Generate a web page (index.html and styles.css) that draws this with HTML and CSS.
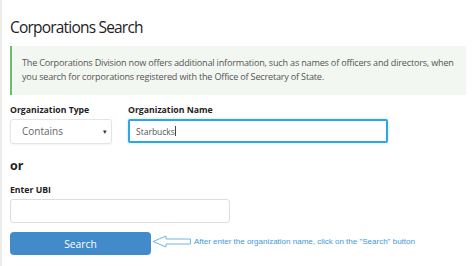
FILE: index.html
```html
<!DOCTYPE html>
<html lang="en">
<head>
    <meta charset="UTF-8">
    <title>Corporations Search</title>
    <link rel="stylesheet" href="styles.css">
</head>
<body>
    <div class="page">
        <h1>Corporations Search</h1>

        <div class="notice">
            The Corporations Division now offers additional information, such as names of officers and directors, when<br>
            you search for corporations registered with the Office of Secretary of State.
        </div>

        <div class="row">
            <div class="field">
                <label>Organization Type</label>
                <div class="select">
                    <span>Contains</span>
                    <span class="caret">&#9662;</span>
                </div>
            </div>
            <div class="field">
                <label>Organization Name</label>
                <div class="name-input">Starbucks<span class="cursor"></span></div>
            </div>
        </div>

        <div class="or">or</div>

        <div class="field">
            <label>Enter UBI</label>
            <div class="ubi-input"></div>
        </div>

        <div class="actions">
            <button>Search</button>
            <span class="callout">
                <svg class="arrow" width="40" height="13" viewBox="0 0 40 13">
                    <path d="M1 6.5 L14 1 L14 4 L38.5 4 L38.5 9 L14 9 L14 12 Z" fill="none" stroke="#6bb8e4" stroke-width="1"/>
                </svg>
                <span class="hint">After enter the organization name, click on the "Search" button</span>
            </span>
        </div>
    </div>
</body>
</html>
```

FILE: styles.css
```css
html, body {
    margin: 0;
    height: 100%;
}

body {
    font-family: 'Open Sans', 'Liberation Sans', sans-serif;
    background: #fff;
    color: #222;
}

.page {
    box-sizing: border-box;
    height: 100%;
    border-left: 2px solid #ececec;
    padding: 17px 8px 0 8px;
}

h1 {
    font-size: 15.5px;
    font-weight: 400;
    letter-spacing: -0.8px;
    margin: 0 0 9px 0;
    line-height: 20px;
}

.notice {
    background: #f3f7f1;
    border-left: 2px solid #6bbd6b;
    color: #555;
    font-size: 9.1px;
    letter-spacing: -0.2px;
    line-height: 14px;
    padding: 10px 4px 11px 10px;
    white-space: nowrap;
}

.row {
    display: flex;
    gap: 16px;
    margin-top: 9px;
}

.field label {
    display: block;
    font-size: 8.7px;
    font-weight: 700;
    color: #222;
    line-height: 12px;
    margin-bottom: 3px;
}

.select {
    box-sizing: border-box;
    width: 102px;
    height: 25px;
    border: 1px solid #e4e4e4;
    border-radius: 3px;
    box-shadow: 0 1px 2px rgba(0,0,0,0.05);
    display: flex;
    align-items: center;
    justify-content: space-between;
    padding: 0 4px 1px 11px;
    font-size: 10px;
    color: #666;
}

.caret {
    font-size: 7px;
    color: #333;
}

.name-input {
    box-sizing: border-box;
    width: 260px;
    height: 24px;
    border: 2px solid #2ea7de;
    border-radius: 2px;
    display: flex;
    align-items: center;
    padding-left: 6px;
    font-size: 8.5px;
    color: #555;
    box-shadow: 0 0 3px rgba(46,167,222,0.35);
}

.cursor {
    display: inline-block;
    width: 1px;
    height: 10px;
    background: #444;
}

.or {
    font-size: 12.5px;
    font-weight: 700;
    margin: 14px 0 10px 0;
    line-height: 16px;
}

.ubi-input {
    box-sizing: border-box;
    width: 220px;
    height: 24px;
    border: 1px solid #ddd;
    border-radius: 3px;
}

.actions {
    display: flex;
    align-items: center;
    margin-top: 9px;
}

button {
    width: 141px;
    height: 23px;
    background-color: #428bca;
    color: white;
    border: none;
    border-radius: 4px;
    font-family: 'Open Sans', 'Liberation Sans', sans-serif;
    font-size: 10.3px;
    padding: 0;
}

.callout {
    display: flex;
    align-items: center;
    margin-bottom: 4px;
}

.arrow {
    margin-left: 1px;
}

.hint {
    font-family: 'Liberation Sans', sans-serif;
    font-size: 8px;
    color: #3d9ad8;
    margin-left: 2px;
}
```
